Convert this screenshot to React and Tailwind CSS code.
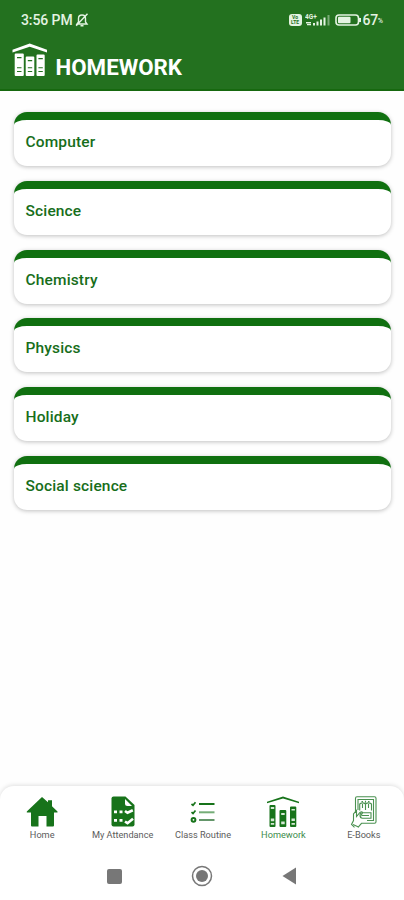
import React, { useState } from 'react';

const subjects = ['Computer', 'Science', 'Chemistry', 'Physics', 'Holiday', 'Social science'];

const BooksIcon = () => (
    <svg viewBox="0 0 36 34" className="h-[34px] w-9" fill="currentColor">
        <path d="M.5 9.400V6.800L17.700.5l17.300 6.300v2.600L17.700 3.800z" />
        <path fillRule="evenodd" d="M2.700 11.500q0-1 1-1h7.100q1 0 1 1V32q0 1-1 1H3.700q-1 0-1-1zM5 14v1.200h4.500V14zM5 24.200v1h4.500v-1zM5 28v1h4.500v-1z" />
        <path fillRule="evenodd" d="M13.700 14.500q0-1 1-1h6.600q1 0 1 1V32q0 1-1 1h-6.600q-1 0-1-1zM15.800 17v1.200h4.400V17zM15.800 24.200v1h4.400v-1zM15.800 28v1h4.400v-1z" />
        <path fillRule="evenodd" d="M24.500 12.500q0-1 1-1h6.200q1 0 1 1V32q0 1-1 1h-6.200q-1 0-1-1zM26.400 15v1.200h4.400V15zM26.400 24.200v1h4.400v-1zM26.400 28v1h4.400v-1z" />
    </svg>
);

const ShelfIcon = () => (
    <svg viewBox="0 0 32 32" className="h-8 w-8" fill="#17731a">
        <path d="M0 7.300V5.800L16 .5l16 5.300v1.500L16 2.500z" />
        <path d="M2.500 10q0-1 1-1H7.500q1 0 1 1v20q0 1-1 1h-4q-1 0-1-1zM12.500 15q0-1 1-1h4.800q1 0 1 1v15q0 1-1 1h-4.800q-1 0-1-1zM23 11.500q0-1 1-1H28.300q1 0 1 1V30q0 1-1 1H24q-1 0-1-1z" />
        <path fill="#d5e8d5" d="M3.800 11h3.400v2H3.800zM3.800 22.500h3.400v2.700H3.800zM3.800 27h3.400v1.800H3.800zM14.200 17h3.500v2h-3.500zM14.200 25.500h3.500v2.800h-3.500zM24.500 13h3.400v1.500h-3.400zM24.500 22.500h3.400v2.500h-3.400zM24.500 27h3.400v1.800h-3.400z" />
    </svg>
);

const HomeIcon = () => (
    <svg viewBox="0 0 32 32" className="h-8 w-8" fill="#17731a">
        <path d="M16 1l6 5.300V4.200h4v6.100L31.500 15.500V16.500H28V29.500q0 1-1 1h-6.500V20h-8v10.500H6q-1 0-1-1V16.500H.8V15.500z" />
    </svg>
);

const AttendanceIcon = () => (
    <svg viewBox="0 0 32 32" className="h-8 w-8" fill="#17731a">
        <path d="M4.500 2.500q0-2 2-2H18.500l9 8.500v19.500q0 2-2 2h-19q-2 0-2-2z" />
        <g fill="#fff">
            <path d="M18 3l7 7h-4.500q-2.500 0-2.500-2.500z" />
            <path d="M7 14.500h3v2.700H7zM12.500 14.500h3v2.700h-3zM7 23h3v2.700H7zM12.500 23h3v2.700h-3z" />
        </g>
        <path d="M18 15l2.500 1.800 5.300-2.500M18 25.500l2.500 1.700 5.500-4.500" fill="none" stroke="#fff" strokeWidth="2.600" />
    </svg>
);

const RoutineIcon = () => (
    <svg viewBox="0 0 32 32" className="h-8 w-8" fill="none" stroke="#17731a">
        <path d="M4.500 8l1.500 1.300L8.500 6.200M4.500 16.200L6 17.500l2.500-3" strokeWidth="1.700" />
        <circle cx="6.500" cy="23.800" r="1.900" strokeWidth="2" />
        <path d="M12 8h15.500" strokeWidth="2" />
        <path d="M12 16.300h15.500" strokeWidth="2" stroke="#75ad77" />
        <path d="M12 24h15.500" strokeWidth="2" stroke="#64966a" />
    </svg>
);

const EbooksIcon = () => (
    <svg viewBox="0 0 32 32" className="h-8 w-8" fill="none" stroke="#4a9150" strokeWidth="1.100">
        <path d="M7.500 17V2.200Q7.500.8 9 .8h17.500Q28 .8 28 2.200v23.500q0 1.500-1.500 1.500H18" />
        <path d="M10 14V3.500h15.500V24.500H19" />
        <path d="M11.700 14.500V8q3-2.300 5.800 0 3-2.300 6 0v6.500M17.500 8v6M13.500 5.500H15M20 5.500h1.500M17.500 4.800v2M14.500 8v4M20.500 8v4" />
        <path d="M6.500 31.300L3.500 28.500l2-4V18l3-3.500v6l3.500-4q2-1.500 2.500.2l-2 4M10 31.300l3.500-4H18" />
        <path d="M12 19.300q0-2.500 2.500-2.500h8.500v5.500h-8.500Q12 22.300 12 19.300zM14 19.500h7M5 28.500l5.500 2.500" />
    </svg>
);

const tabs = [
    { label: 'Home', Icon: HomeIcon },
    { label: 'My Attendance', Icon: AttendanceIcon },
    { label: 'Class Routine', Icon: RoutineIcon },
    { label: 'Homework', Icon: ShelfIcon },
    { label: 'E-Books', Icon: EbooksIcon }
];

const StatusBar = () => (
    <div className="flex h-10 items-center pl-[21px] pr-[21px] text-[#e4f3e2]">
        <span className="text-[14px] font-medium leading-none tracking-[-0.1px]">3:56 PM</span>
        {/* Muted bell */}
        <svg viewBox="0 0 14 14" className="ml-0.5 h-[14px] w-[14px]" fill="none" stroke="currentColor" strokeWidth="1.400">
            <path d="M2 11h10L10.500 9V5.500Q10.500 2 7 2T3.500 5.500V9zM5.500 12.700h3M12.500.8L1.200 12.800" />
        </svg>
        <div className="ml-auto flex items-center">
            <span className="flex h-3 w-[13px] flex-col items-center justify-center rounded-[3px] bg-[#e4f3e2] text-[5px] font-bold leading-[5px] text-[#23711f]">
                <span>Vo</span>
                <span>LTE</span>
            </span>
            <svg viewBox="0 0 26 14" className="ml-[3px] h-[14px] w-[26px]" fill="currentColor">
                <text x="0" y="6" fontSize="6.500" fontWeight="700">4G+</text>
                <path d="M1 9h5v1.500H1zM2 11h4v1.300H2zM8 10h2v2.500H8zM11.500 8.500h2v4h-2zM15 6.500h2v6h-2zM18.500 4.500h2v8h-2z" />
                <path d="M22.500 2h2v10.500h-2z" opacity=".45" />
            </svg>
            <svg viewBox="0 0 28 12" className="ml-1 h-3 w-7" fill="none" stroke="currentColor">
                <rect x="1" y="1" width="22.500" height="10" rx="3" strokeWidth="1.600" />
                <rect x="3" y="2.800" width="12.500" height="6.400" rx="1" fill="currentColor" stroke="none" />
                <path d="M25 4v4" strokeWidth="2" />
            </svg>
            <span className="text-[14px] font-medium leading-none tracking-[-0.3px]">67</span>
            <span className="mt-[3px] text-[7px] font-medium leading-none">%</span>
        </div>
    </div>
);

const App = () => {
    const [active, setActive] = useState('Homework');

    return (
        <div className="flex h-[900px] w-[404px] flex-col overflow-hidden bg-[#fefefe] font-[Roboto,sans-serif]">
            <header className="h-[91px] shrink-0 border-b-2 border-[#16680f] bg-[#23711f]">
                <StatusBar />
                <div className="flex items-start pl-3 pt-[3px] text-white">
                    <BooksIcon />
                    <h1 className="ml-[7.500px] mt-[11px] text-[22.300px] font-bold leading-[27px]">HOMEWORK</h1>
                </div>
            </header>

            <main className="flex flex-1 flex-col gap-[14.8px] pl-3.5 pr-[13px] pt-[21px]">
                {subjects.map(subject => (
                    <button
                        key={subject}
                        className="h-[54px] shrink-0 rounded-[13px] border-t-8 border-[#107010] bg-white pb-px pl-[11.500px] text-left text-[15.500px] font-medium leading-[23px] tracking-[0.15px] text-[#176e1b] shadow-[0_1px_4px_rgba(0,0,0,0.25)]"
                    >
                        {subject}
                    </button>
                ))}
            </main>

            <nav className="flex h-[66px] shrink-0 rounded-t-[14px] bg-white pl-0.5 pt-2.5 shadow-[0_-1px_4px_rgba(0,0,0,0.12)]">
                {tabs.map(({ label, Icon }) => (
                    <button key={label} onClick={() => setActive(label)} className="flex flex-1 flex-col items-center">
                        <Icon />
                        <span className={`mt-px whitespace-nowrap text-[9.200px] leading-[12px] ${active === label ? 'text-[#3d8c4b]' : 'text-[#5c5c5c]'}`}>
                            {label}
                        </span>
                    </button>
                ))}
            </nav>

            {/* System navigation */}
            <div className="flex h-12 shrink-0 items-center justify-center gap-[69px] bg-white text-[#777]">
                <span className="h-[15px] w-[15px] rounded-[2px] bg-[#777]" />
                <svg viewBox="0 0 22 22" className="h-[22px] w-[22px]">
                    <circle cx="11" cy="11" r="9.500" fill="none" stroke="currentColor" strokeWidth="1.500" />
                    <circle cx="11" cy="11" r="6" fill="currentColor" />
                </svg>
                <svg viewBox="0 0 15 18" className="h-[18px] w-[15px]" fill="currentColor">
                    <path d="M.5 9L14 .5v17z" />
                </svg>
            </div>
        </div>
    );
};

export default App;
